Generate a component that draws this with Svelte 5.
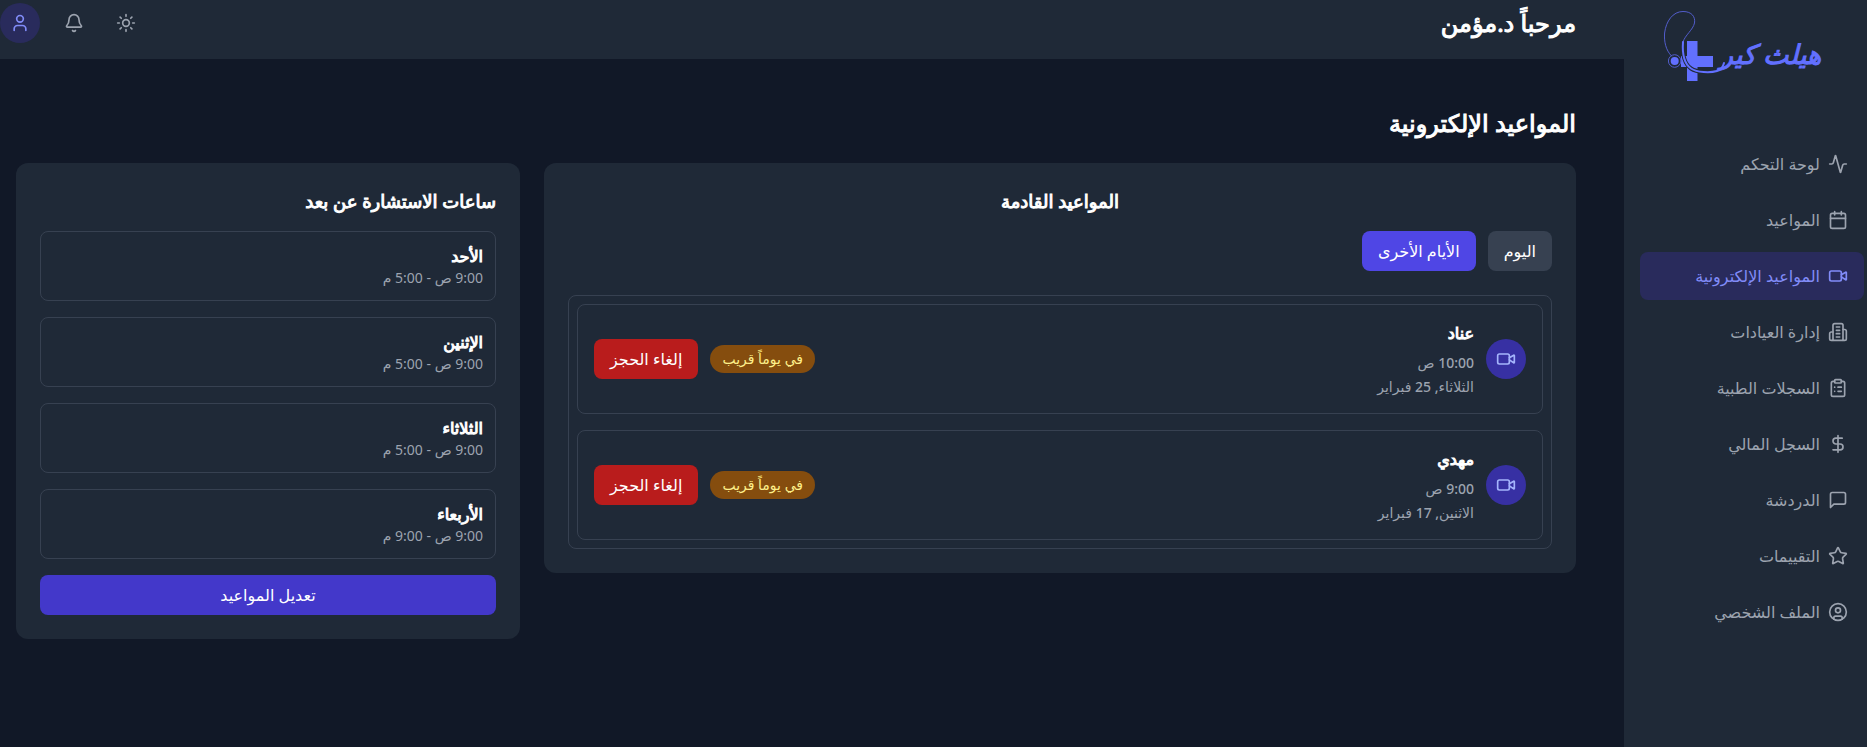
<script>
  const icons = {
    activity: '<path d="M22 12h-2.48a2 2 0 0 0-1.93 1.46l-2.35 8.36a.25.25 0 0 1-.48 0L9.24 2.18a.25.25 0 0 0-.48 0l-2.35 8.36A2 2 0 0 1 4.49 12H2"/>',
    calendar: '<path d="M8 2v4M16 2v4"/><rect width="18" height="18" x="3" y="4" rx="2"/><path d="M3 10h18"/>',
    video: '<path d="m16 13 5.223 3.482a.5.5 0 0 0 .777-.416V7.87a.5.5 0 0 0-.752-.432L16 10.5"/><rect x="2" y="6" width="14" height="12" rx="2"/>',
    building: '<path d="M6 22V4a2 2 0 0 1 2-2h8a2 2 0 0 1 2 2v18Z"/><path d="M6 12H4a2 2 0 0 0-2 2v6a2 2 0 0 0 2 2h2"/><path d="M18 9h2a2 2 0 0 1 2 2v9a2 2 0 0 1-2 2h-2"/><path d="M10 6h4M10 10h4M10 14h4M10 18h4"/>',
    clipboard: '<rect width="8" height="4" x="8" y="2" rx="1"/><path d="M16 4h2a2 2 0 0 1 2 2v14a2 2 0 0 1-2 2H6a2 2 0 0 1-2-2V6a2 2 0 0 1 2-2h2"/><path d="M12 11h4M12 16h4M8 11h.01M8 16h.01"/>',
    dollar: '<path d="M12 2v20"/><path d="M17 5H9.5a3.5 3.5 0 0 0 0 7h5a3.5 3.5 0 0 1 0 7H6"/>',
    message: '<path d="M21 15a2 2 0 0 1-2 2H7l-4 4V5a2 2 0 0 1 2-2h14a2 2 0 0 1 2 2z"/>',
    star: '<path d="M11.525 2.295a.53.53 0 0 1 .95 0l2.31 4.679a2.123 2.123 0 0 0 1.595 1.16l5.166.756a.53.53 0 0 1 .294.904l-3.736 3.638a2.123 2.123 0 0 0-.611 1.878l.882 5.14a.53.53 0 0 1-.771.56l-4.618-2.428a2.122 2.122 0 0 0-1.973 0L6.396 21.01a.53.53 0 0 1-.77-.56l.881-5.139a2.122 2.122 0 0 0-.611-1.879L2.16 9.795a.53.53 0 0 1 .294-.906l5.165-.755a2.122 2.122 0 0 0 1.597-1.16z"/>',
    profile: '<circle cx="12" cy="12" r="10"/><circle cx="12" cy="10" r="3"/><path d="M7 20.662V19a2 2 0 0 1 2-2h6a2 2 0 0 1 2 2v1.662"/>',
    user: '<path d="M19 21v-2a4 4 0 0 0-4-4H9a4 4 0 0 0-4 4v2"/><circle cx="12" cy="7" r="4"/>',
    bell: '<path d="M10.268 21a2 2 0 0 0 3.464 0"/><path d="M3.262 15.326A1 1 0 0 0 4 17h16a1 1 0 0 0 .74-1.673C19.41 13.956 18 12.499 18 8A6 6 0 0 0 6 8c0 4.499-1.411 5.956-2.738 7.326"/>',
    sun: '<circle cx="12" cy="12" r="4"/><path d="M12 2v2M12 20v2M4.93 4.93l1.41 1.41M17.66 17.66l1.41 1.41M2 12h2M20 12h2M6.34 17.66l-1.41 1.41M19.07 4.93l-1.41 1.41"/>'
  };

  const nav = [
    { label: 'لوحة التحكم', icon: 'activity' },
    { label: 'المواعيد', icon: 'calendar' },
    { label: 'المواعيد الإلكترونية', icon: 'video' },
    { label: 'إدارة العيادات', icon: 'building' },
    { label: 'السجلات الطبية', icon: 'clipboard' },
    { label: 'السجل المالي', icon: 'dollar' },
    { label: 'الدردشة', icon: 'message' },
    { label: 'التقييمات', icon: 'star' },
    { label: 'الملف الشخصي', icon: 'profile' }
  ];
  let current = $state(2);
  let tab = $state('other');

  const appointments = [
    { name: 'عناد', time: '10:00 ص', date: 'الثلاثاء, 25 فبراير' },
    { name: 'مهدي', time: '9:00 ص', date: 'الاثنين, 17 فبراير' }
  ];
  const hours = [
    { day: 'الأحد', range: '9:00 ص - 5:00 م' },
    { day: 'الإثنين', range: '9:00 ص - 5:00 م' },
    { day: 'الثلاثاء', range: '9:00 ص - 5:00 م' },
    { day: 'الأربعاء', range: '9:00 ص - 9:00 م' }
  ];
</script>

{#snippet icon(name)}
  <svg class="icon" viewBox="0 0 24 24" aria-hidden="true">{@html icons[name]}</svg>
{/snippet}

<div class="app" dir="rtl" lang="ar">
  <aside class="sidebar">
    <a class="logo" href="#home">
      <svg viewBox="40 8 168 76" direction="rtl">
        <path class="cross" d="M67 41h10.500v15H93v11H77.500v14H67V67h-6V56h6z" />
        <path class="tube-gap" d="M63 42C62 56 64.500 64 71 68.500C77 72.500 90 73 97 71" />
        <path class="tube thin" d="M51.500 56C45.500 50 44 41 44.600 33C46 21 53 11.500 63 11.500C72 11.500 75.500 17 74.500 23C73 30 65 35 63 42" />
        <path class="tube" d="M63 42C62 56 64.500 64 71 68.500C77 72.500 90 73 97 71C101 70 103 67 104 63" />
        <circle class="ring" cx="54.700" cy="61" r="6.300" />
        <circle class="cross" cx="54.700" cy="61" r="4" />
        <text class="brand" x="201" y="64">هيلث كير</text>
      </svg>
    </a>
    <nav>
      {#each nav as item, i}
        <a href="#section-{i}" class="nav-item" class:active={current === i} onclick={() => (current = i)}>
          {@render icon(item.icon)}
          <span>{item.label}</span>
        </a>
      {/each}
    </nav>
  </aside>

  <div class="content">
    <header>
      <h1>مرحباً د.مؤمن</h1>
      <div class="tools">
        <button class="tool" aria-label="المظهر">{@render icon('sun')}</button>
        <button class="tool" aria-label="الإشعارات">{@render icon('bell')}</button>
        <button class="tool avatar" aria-label="الحساب">{@render icon('user')}</button>
      </div>
    </header>

    <main>
      <h2>المواعيد الإلكترونية</h2>
      <div class="columns">
        <section class="card upcoming">
          <h3>المواعيد القادمة</h3>
          <div class="tabs">
            <button class="btn tab" class:selected={tab === 'today'} onclick={() => (tab = 'today')}>اليوم</button>
            <button class="btn tab" class:selected={tab === 'other'} onclick={() => (tab = 'other')}>الأيام الأخرى</button>
          </div>
          <div class="list">
            {#each appointments as a}
              <article class="appointment">
                <div class="badge-icon">{@render icon('video')}</div>
                <div class="details">
                  <h4>{a.name}</h4>
                  <p class="time">{a.time}</p>
                  <p class="date">{a.date}</p>
                </div>
                <div class="actions">
                  <span class="status">في يوماً قريب</span>
                  <button class="btn cancel">إلغاء الحجز</button>
                </div>
              </article>
            {/each}
          </div>
        </section>

        <section class="card">
          <h3>ساعات الاستشارة عن بعد</h3>
          <div class="hours">
            {#each hours as h}
              <div class="slot">
                <h4>{h.day}</h4>
                <p>{h.range}</p>
              </div>
            {/each}
            <button class="btn edit">تعديل المواعيد</button>
          </div>
        </section>
      </div>
    </main>
  </div>
</div>

<style>
  :global(body) {
    background: #111827;
  }
  .app {
    display: flex;
    min-height: 100vh;
    background: #111827;
    color: #ffffff;
    font-family: "Noto Sans", "DejaVu Sans", sans-serif;
    font-size: 16px;
    line-height: 24px;
  }
  h1, h2, h3, h4, p {
    margin: 0;
  }
  h1, h2, h3, h4 {
    font-weight: 400;
    -webkit-text-stroke: 1px currentColor;
  }
  .icon {
    display: block;
    width: 20px;
    height: 20px;
    flex: none;
    fill: none;
    stroke: currentColor;
    stroke-width: 2;
    stroke-linecap: round;
    stroke-linejoin: round;
  }
  .sidebar {
    flex: 0 0 243px;
    box-sizing: border-box;
    padding: 8px 3px 16px 16px;
    background: #1f2937;
  }
  .logo {
    display: block;
    margin: 0 0 56px 20px;
  }
  .logo svg {
    display: block;
    width: 168px;
    height: 76px;
    margin-right: auto;
  }
  .cross {
    fill: #6270ff;
  }
  .tube, .tube-gap, .ring {
    fill: none;
    stroke: #6270ff;
    stroke-width: 2;
    stroke-linecap: round;
  }
  .thin {
    stroke: #525dcb;
    stroke-width: 1;
  }
  .ring {
    stroke: #525dcb;
    stroke-width: 1;
  }
  .tube-gap {
    stroke: #1f2937;
    stroke-width: 4;
  }
  .brand {
    fill: #6270ff;
    stroke: #6270ff;
    stroke-width: 1;
    font-size: 27px;
    font-style: italic;
  }
  nav {
    display: flex;
    flex-direction: column;
    gap: 8px;
  }
  .nav-item {
    display: flex;
    align-items: center;
    gap: 8px;
    padding: 12px 16px;
    border-radius: 8px;
    color: #9ca3af;
    text-decoration: none;
    white-space: nowrap;
  }
  .nav-item.active {
    background: #292b5c;
    color: #818cf8;
  }
  .content {
    flex: 1;
    min-width: 0;
  }
  header {
    display: flex;
    align-items: center;
    justify-content: space-between;
    padding: 3px 48px 16px 0;
    background: #1f2937;
  }
  h1, h2 {
    font-size: 24px;
    line-height: 32px;
  }
  .tools {
    display: flex;
    align-items: center;
    gap: 16px;
  }
  .tool {
    display: grid;
    place-items: center;
    width: 36px;
    height: 36px;
    padding: 0;
    border: 0;
    border-radius: 50%;
    background: none;
    color: #9ca3af;
  }
  .avatar {
    width: 40px;
    height: 40px;
    background: #292b5c;
    color: #818cf8;
  }
  main {
    padding: 48px 48px 48px 16px;
  }
  .columns {
    display: grid;
    grid-template-columns: repeat(3, minmax(0, 1fr));
    align-items: start;
    gap: 24px;
    margin-top: 24px;
  }
  .card {
    padding: 24px;
    border-radius: 12px;
    background: #1f2937;
  }
  .upcoming {
    grid-column: span 2;
  }
  h3 {
    margin-bottom: 16px;
    font-size: 18px;
    line-height: 28px;
  }
  .upcoming h3 {
    text-align: center;
  }
  h4 {
    font-size: 16px;
    line-height: 24px;
  }
  .btn {
    padding: 8px 16px;
    border: 0;
    border-radius: 8px;
    color: #ffffff;
    font: inherit;
    white-space: nowrap;
  }
  .tabs {
    display: flex;
    gap: 12px;
    margin-bottom: 24px;
  }
  .tab {
    background: #374151;
  }
  .tab.selected {
    background: #4f46e5;
  }
  .list {
    display: flex;
    flex-direction: column;
    gap: 16px;
    padding: 8px;
    border: 1px solid #374151;
    border-radius: 8px;
  }
  .appointment {
    display: flex;
    align-items: center;
    gap: 12px;
    padding: 16px;
    border: 1px solid #374151;
    border-radius: 8px;
  }
  .badge-icon {
    display: grid;
    place-items: center;
    width: 40px;
    height: 40px;
    border-radius: 50%;
    background: #3730a3;
    color: #a5b4fc;
  }
  .details p, .slot p, .status {
    font-size: 14px;
    line-height: 20px;
  }
  .details p, .slot p {
    color: #9ca3af;
  }
  .details p {
    font-weight: 500;
  }
  .details .time {
    margin: 8px 0 4px;
  }
  .actions {
    display: flex;
    align-items: center;
    gap: 12px;
    margin-right: auto;
  }
  .status {
    padding: 4px 12px;
    border-radius: 14px;
    background: #854d0e;
    color: #fef08a;
    white-space: nowrap;
  }
  .cancel {
    background: #b91c1c;
  }
  .hours {
    display: flex;
    flex-direction: column;
    gap: 16px;
  }
  .slot {
    padding: 12px;
    border: 1px solid #374151;
    border-radius: 8px;
  }
  .edit {
    background: #4338ca;
  }
</style>
